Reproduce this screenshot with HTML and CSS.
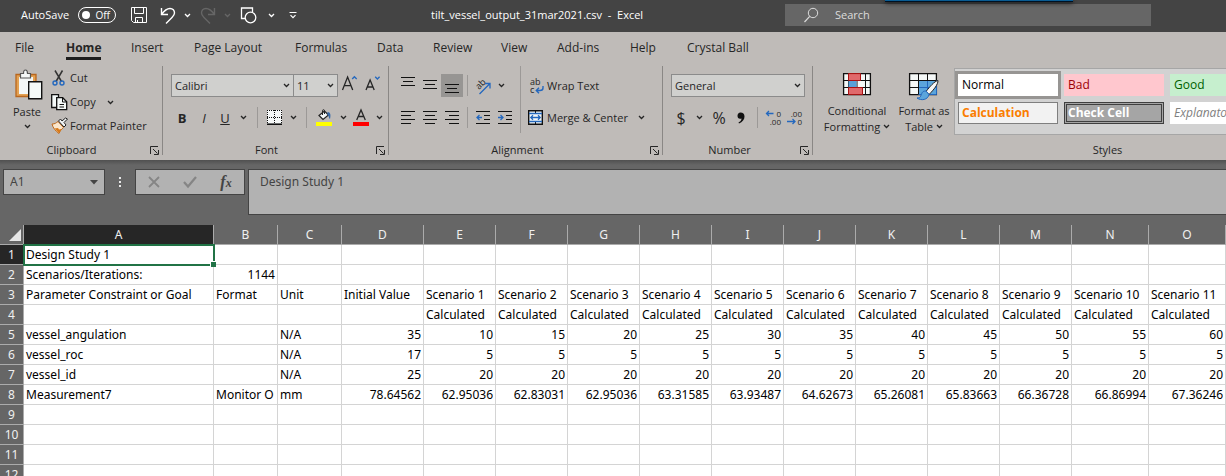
FILE: index.html
```html
<!DOCTYPE html>
<html lang="en">
<head>
<meta charset="utf-8">
<meta name="viewport" content="width=device-width, initial-scale=1">
<title>tilt_vessel_output_31mar2021.csv - Excel</title>
<link rel="stylesheet" href="styles.css">
</head>
<body>
<svg class="sprite" aria-hidden="true">
  <symbol id="chev" viewBox="0 0 7 5"><path d="M1 1l2.5 2.5L6 1" fill="none" stroke="currentColor" stroke-width="1.3"/></symbol>
  <symbol id="launch" viewBox="0 0 9 9"><path d="M.5 8V.5H8M3 3l4.500 4.500M8.500 4v4.500H4" fill="none" stroke="currentColor"/></symbol>
</svg>

<header class="titlebar">
  <div class="quick">
    <label class="autosave-label" for="autosave">AutoSave</label>
    <span class="toggle"><input type="checkbox" id="autosave"><span>Off</span></span>
    <button aria-label="Save"><svg width="16" height="16" viewBox="0 0 16 16"><path d="M.5.5h15v15h-13l-2-2zM3.500.5v6h9v-6M4.500 15.500v-5h7v5M6.500 13v2" fill="none" stroke="currentColor"/></svg></button>
    <button aria-label="Undo"><svg width="16" height="17" viewBox="0 0 16 17"><path d="M1.500 1v6.500H8M1.500 7.500C4 4 6.500 1.500 10 1.500c3 0 4.500 2 4.500 4.500 0 2-1 3-2.500 4.500L6 16.500" fill="none" stroke="currentColor" stroke-width="1.400"/></svg></button>
    <button aria-label="Undo list"><svg class="chev"><use href="#chev"/></svg></button>
    <button class="dim" aria-label="Redo"><svg width="16" height="17" viewBox="0 0 16 17"><path d="M14.500 1v6.500H8M14.500 7.500C12 4 9.500 1.500 6 1.500c-3 0-4.500 2-4.500 4.500 0 2 1 3 2.500 4.500l6 6" fill="none" stroke="currentColor" stroke-width="1.400"/></svg></button>
    <button class="dim" aria-label="Redo list"><svg class="chev"><use href="#chev"/></svg></button>
    <button aria-label="Shapes"><svg width="17" height="17" viewBox="0 0 17 17"><path d="M5 11.500H1.500V1h11v4" fill="none" stroke="currentColor" stroke-width="1.300"/><circle cx="10.500" cy="10.500" r="5.300" fill="none" stroke="currentColor" stroke-width="1.300"/></svg></button>
    <button aria-label="Shapes list"><svg class="chev"><use href="#chev"/></svg></button>
    <button aria-label="Customize toolbar"><svg width="8" height="7" viewBox="0 0 8 7"><path d="M.5.5h7M1.500 3.200L4 5.700l2.500-2.500" fill="none" stroke="currentColor" stroke-width="1.200"/></svg></button>
  </div>
  <div class="doc-title">tilt_vessel_output_31mar2021.csv&nbsp; -&nbsp; Excel</div>
  <label class="search">
    <svg width="15" height="16" viewBox="0 0 15 16"><circle cx="9" cy="6" r="4.700" fill="none" stroke="currentColor"/><path d="M5.700 9.300L.5 15" stroke="currentColor" stroke-width="1.200"/></svg>
    <input type="text" placeholder="Search" aria-label="Search">
  </label>
  <div class="share-strip"></div>
</header>

<section class="ribbon">
  <nav class="tabs">
    <a href="#">File</a><a href="#" class="active">Home</a><a href="#">Insert</a><a href="#">Page Layout</a><a href="#">Formulas</a><a href="#">Data</a><a href="#">Review</a><a href="#">View</a><a href="#">Add-ins</a><a href="#">Help</a><a href="#">Crystal Ball</a>
  </nav>
  <div class="groups">
    <div class="group clipboard">
      <div class="clip-body">
        <button class="paste">
          <svg width="28" height="31" viewBox="0 0 28 31"><path d="M1 5.500h20v22H1z" fill="#e3a152" stroke="#b8661e" stroke-width="1.300"/><path d="M4 8h14v17H4z" fill="#f4f7f7"/><path d="M5.500 9V4.500h3C8.500 2 9 1 10.500 1s2 1 2 3.500h3V9z" fill="#f4f7f7" stroke="#555" stroke-width="1.200"/><path d="M13.700 12.700h13v17h-13z" fill="#f4f9f8" stroke="#111" stroke-width="1.400"/></svg>
          <span>Paste</span>
          <svg class="chev"><use href="#chev"/></svg>
        </button>
        <div class="clip-list">
          <button><svg width="18" height="16" viewBox="0 0 18 16"><path d="M4 .5l6.500 11M11.500.5L5 11.500" stroke="#333" stroke-width="1.500"/><circle cx="4" cy="13" r="2" fill="none" stroke="#2468be" stroke-width="1.400"/><circle cx="11" cy="13" r="2" fill="none" stroke="#2468be" stroke-width="1.400"/></svg><span>Cut</span></button>
          <button><svg width="18" height="17" viewBox="0 0 18 17"><path d="M6 13.500H.7V.7H7.500v3" fill="#f4f9f8" stroke="#111" stroke-width="1.300"/><path d="M5.700 3.700h6l4 4v8h-10z" fill="#f4f9f8" stroke="#111" stroke-width="1.300"/><path d="M11.500 3.700V8h4M8.500 10.500h4.500M8.500 13h4.500" fill="none" stroke="#111"/></svg><span>Copy</span><svg class="chev"><use href="#chev"/></svg></button>
          <button><svg width="18" height="16" viewBox="0 0 18 16"><path d="M1 6c3 0 4-1 6-2.500l5.500 6C10 11.500 9 13 8 15.500 4.500 13 2 10 1 6z" fill="#fae6cc" stroke="#bc681c"/><path d="M3.500 10.500L7 10l1 1.500 3-.500-3 4z" fill="#d87918"/><path d="M7.500 3l5.500 6 2-2-2-2.500L16.500 1 14.500 0 11 3 9.500 1z" fill="#f4f7f7" stroke="#222"/></svg><span>Format Painter</span></button>
        </div>
      </div>
      <footer><span>Clipboard</span><button aria-label="Clipboard settings"><svg class="launch"><use href="#launch"/></svg></button></footer>
    </div>

    <div class="group font">
      <div class="rows">
        <div class="font-row1">
          <span class="combo"><select aria-label="Font"><option>Calibri</option></select><svg class="chev"><use href="#chev"/></svg></span>
          <span class="combo size"><select aria-label="Font size"><option>11</option></select><svg class="chev"><use href="#chev"/></svg></span>
          <button aria-label="Increase font size"><svg width="18" height="18" viewBox="0 0 18 18"><path d="M2.500 16L7.600 3l5.100 13M4.300 11.700h6.600" fill="none" stroke="#262626" stroke-width="1.300"/><path d="M12.200 5l2.200-2.300L16.700 5" fill="none" stroke="#2468be" stroke-width="1.300"/></svg></button>
          <button aria-label="Decrease font size"><svg width="18" height="18" viewBox="0 0 18 18"><path d="M3 16L7.100 6l4.100 10M4.400 13h5.400" fill="none" stroke="#262626" stroke-width="1.300"/><path d="M12.200 2.700L14.400 5l2.200-2.300" fill="none" stroke="#2468be" stroke-width="1.300"/></svg></button>
        </div>
        <div class="font-row2">
          <button class="glyph"><b>B</b></button><button class="glyph"><i>I</i></button><button class="glyph"><u>U</u></button>
          <button aria-label="Underline styles"><svg class="chev"><use href="#chev"/></svg></button>
          <span class="sep"></span>
          <button aria-label="Borders"><svg width="15" height="15" viewBox="0 0 15 15"><path d="M0 0h15v15H0z" fill="#f5f7f7"/><path d="M0 .5h15M0 7.500h15M.5 0v14M7.500 0v14M14.500 0v14" stroke="#111" stroke-dasharray="1 1"/><path d="M0 14.200h15" stroke="#111" stroke-width="1.600"/></svg></button>
          <button aria-label="Border list"><svg class="chev"><use href="#chev"/></svg></button>
          <span class="sep"></span>
          <button aria-label="Fill color"><svg width="16" height="17" viewBox="0 0 16 17"><path d="M3 6.500L8.500 2l4 4-5.500 4.500z" fill="#f4f7f7" stroke="#222" stroke-width="1.200"/><path d="M6.500 6V1.500c0-1 2-1 2 0V5" fill="none" stroke="#222"/><path d="M11.500 3c3 0 3.500 3 2.500 7-1.500-1-1-4-2.500-4z" fill="#3769a8"/><path d="M0 13h16v4H0z" fill="#ff0"/></svg></button>
          <button aria-label="Fill color list"><svg class="chev"><use href="#chev"/></svg></button>
          <button aria-label="Font color"><svg width="16" height="17" viewBox="0 0 16 17"><path d="M3.700 11L8 1l4.300 10M5.200 7.500h5.600" fill="none" stroke="#262626" stroke-width="1.300"/><path d="M0 13h16v4H0z" fill="#f00"/></svg></button>
          <button aria-label="Font color list"><svg class="chev"><use href="#chev"/></svg></button>
        </div>
      </div>
      <footer><span>Font</span><button aria-label="Font settings"><svg class="launch"><use href="#launch"/></svg></button></footer>
    </div>

    <div class="group alignment">
      <div class="align-body">
        <div class="rows">
          <div class="align-row">
            <button aria-label="Top align"><svg width="14" height="20" viewBox="0 0 14 20"><path d="M0 1.500h14M2 5.500h10M0 9.500h14" stroke="#111"/></svg></button>
            <button aria-label="Middle align"><svg width="14" height="20" viewBox="0 0 14 20"><path d="M0 4.500h14M2 8.500h10M0 12.500h14" stroke="#111"/></svg></button>
            <button class="pressed" aria-label="Bottom align"><svg width="14" height="20" viewBox="0 0 14 20"><path d="M0 8.500h14M2 12.500h10M0 16.500h14" stroke="#111"/></svg></button>
            <span class="sep"></span>
            <button aria-label="Orientation"><svg width="18" height="18" viewBox="0 0 18 18"><text transform="translate(5 13) rotate(-45)" class="icon-text">ab</text><path d="M5.500 17L16 6.500M11 6.500h5v5" fill="none" stroke="#2468be" stroke-width="1.300"/></svg></button>
            <button aria-label="Orientation list"><svg class="chev"><use href="#chev"/></svg></button>
          </div>
          <div class="align-row low">
            <button aria-label="Align left"><svg width="14" height="14" viewBox="0 0 14 14"><path d="M0 .5h14M0 4.500h10M0 8.500h14M0 12.500h10" stroke="#111"/></svg></button>
            <button aria-label="Center"><svg width="14" height="14" viewBox="0 0 14 14"><path d="M0 .5h14M2 4.500h10M0 8.500h14M2 12.500h10" stroke="#111"/></svg></button>
            <button aria-label="Align right"><svg width="14" height="14" viewBox="0 0 14 14"><path d="M0 .5h14M4 4.500h10M0 8.500h14M4 12.500h10" stroke="#111"/></svg></button>
            <span class="sep"></span>
            <button aria-label="Decrease indent"><svg width="14" height="14" viewBox="0 0 14 14"><path d="M0 .5h14M8 4.500h6M8 8.500h6M0 12.500h14" stroke="#111"/><path d="M6 6.500H1M3.500 4L1 6.500 3.500 9" fill="none" stroke="#2468be" stroke-width="1.300"/></svg></button>
            <button aria-label="Increase indent"><svg width="14" height="14" viewBox="0 0 14 14"><path d="M0 .5h14M8 4.500h6M8 8.500h6M0 12.500h14" stroke="#111"/><path d="M0 6.500h5M2.500 4L5 6.500 2.500 9" fill="none" stroke="#2468be" stroke-width="1.300"/></svg></button>
          </div>
        </div>
        <div class="rows wraps">
          <button><svg width="18" height="18" viewBox="0 0 18 18"><text x="2" y="8" class="icon-text">ab</text><text x="2" y="16" class="icon-text">c</text><path d="M15 9v2c0 2-1 2.500-3 2.500H8.500M11 10.800l-2.700 2.700 2.700 2.700" fill="none" stroke="#2468be" stroke-width="1.400"/></svg><span>Wrap Text</span></button>
          <button class="merge"><svg width="18" height="15" viewBox="0 0 18 15"><path d="M.7.7h13.600v13.600H.7z" fill="#f5f8f8" stroke="#111" stroke-width="1.400"/><path d="M7.500.5v3M7.500 11.500v3" stroke="#111"/><path d="M1 3.500h13M1 11.500h13" stroke="#2468be" stroke-width="1.400"/><path d="M3 7.500h9M5 5.300L2.800 7.500 5 9.700M10 5.300l2.200 2.200L10 9.700" fill="none" stroke="#2468be" stroke-width="1.300"/></svg><span>Merge &amp; Center</span><svg class="chev"><use href="#chev"/></svg></button>
        </div>
      </div>
      <footer><span>Alignment</span><button aria-label="Alignment settings"><svg class="launch"><use href="#launch"/></svg></button></footer>
    </div>

    <div class="group number">
      <div class="rows">
        <span class="combo"><select aria-label="Number format"><option>General</option></select><svg class="chev"><use href="#chev"/></svg></span>
        <div class="num-row">
          <button class="sign">$</button>
          <button aria-label="Currency list"><svg class="chev"><use href="#chev"/></svg></button>
          <button class="sign">%</button>
          <button aria-label="Comma style"><svg width="8" height="12" viewBox="0 0 8 12"><path d="M3.500.5C6 .5 7.500 2 7.500 4.500c0 3-2 5.500-5.500 7l-.5-1C4 9 4.500 8 4.500 6.500 2 7.500.5 6 .5 3.800.5 2 1.700.5 3.500.5z" fill="#111"/></svg></button>
          <span class="sep"></span>
          <button aria-label="Increase decimal"><svg width="16" height="17" viewBox="0 0 16 17"><text x="16" y="8" class="digits">0</text><text x="16" y="16" class="digits">.00</text><path d="M8.500 4.500h-7M4 2L1.500 4.500 4 7" fill="none" stroke="#2468be" stroke-width="1.300"/></svg></button>
          <button aria-label="Decrease decimal"><svg width="16" height="17" viewBox="0 0 16 17"><text x="16" y="8" class="digits">.00</text><text x="16" y="16" class="digits">0</text><path d="M1 12.500h8M6.500 10L9 12.500 6.500 15" fill="none" stroke="#2468be" stroke-width="1.300"/></svg></button>
        </div>
      </div>
      <footer><span>Number</span><button aria-label="Number settings"><svg class="launch"><use href="#launch"/></svg></button></footer>
    </div>

    <div class="group styles">
      <div class="styles-body">
        <button class="big"><svg width="28" height="29" viewBox="0 0 28 29"><path d="M.6.6h26.800v21H.6z" fill="#f5f8f7" stroke="#111" stroke-width="1.300"/><path d="M0 7.500h28M0 14.500h28M5.500 0v22M22.500 0v22M14 7v8" stroke="#111"/><path d="M5.500.6h12v6.900h-12zM5.500 14.500h14v7.100h-14z" fill="#e0696b" stroke="#a11"/><path d="M5.500 8h8v6h-8z" fill="#58a0d8"/></svg><span>Conditional<br>Formatting <svg class="chev"><use href="#chev"/></svg></span></button>
        <button class="big"><svg width="30" height="29" viewBox="0 0 30 29"><path d="M.6.6h26.800v21H.6z" fill="#f5f8f7" stroke="#111" stroke-width="1.300"/><path d="M9.500 7.500h18v14h-18z" fill="#5ba5dc"/><path d="M0 7.500h28M0 14.500h10M9.500 0v22M18.500 0v8" stroke="#111"/><path d="M10 14.500h17M18.500 8v13M9.500 21.500h18v-14" fill="none" stroke="#2468be"/><path d="M29 7.500c-4 1-8 6-12 11l3 3c5-5 9-10 9-14z" fill="#f7f7f7" stroke="#222"/><path d="M17 18c-4 0-4 2-5 4.500-.7 2-2 2.500-4 2.500 4 3 11 2 12-3.500z" fill="#5ba5dc" stroke="#2468be"/></svg><span>Format as<br>Table <svg class="chev"><use href="#chev"/></svg></span></button>
        <div class="gallery">
          <button class="st normal">Normal</button><button class="st bad">Bad</button><button class="st good">Good</button>
          <button class="st calc">Calculation</button><button class="st check">Check Cell</button><button class="st expl">Explanatory T...</button>
        </div>
      </div>
      <footer><span>Styles</span></footer>
    </div>
  </div>
</section>

<section class="formula-bar">
  <div class="name-box"><input type="text" value="A1" aria-label="Name box"><svg width="8" height="5" viewBox="0 0 8 5"><path d="M0 0h8L4 4.500z" fill="#444"/></svg></div>
  <svg class="dots" width="3" height="11" viewBox="0 0 3 11"><path d="M0 0h2v2H0zM0 4h2v2H0zM0 8h2v2H0z" fill="#e8e8e8"/></svg>
  <div class="fx">
    <button aria-label="Cancel"><svg width="12" height="12" viewBox="0 0 12 12"><path d="M1 1l10 10M11 1L1 11" stroke="#858585" stroke-width="1.800"/></svg></button>
    <button aria-label="Enter"><svg width="14" height="12" viewBox="0 0 14 12"><path d="M1 6l4 4.500L13 1" fill="none" stroke="#858585" stroke-width="2.200"/></svg></button>
    <button class="fn" aria-label="Insert function">f<small>x</small></button>
  </div>
  <textarea class="formula" aria-label="Formula">Design Study 1</textarea>
</section>

<main class="sheet">
  <table>
    <colgroup><col class="w-head"><col class="w-a"><col class="w-b"><col class="w-b"><col class="w-d"><col class="w-s"><col class="w-s"><col class="w-s"><col class="w-s"><col class="w-s"><col class="w-s"><col class="w-s"><col class="w-s"><col class="w-s"><col class="w-n"><col class="w-n"><col></colgroup>
    <thead><tr><th class="corner"><svg width="12" height="12" viewBox="0 0 12 12"><path d="M12 0v12H0z" fill="#e6e6e6"/></svg></th><th class="on">A</th><th>B</th><th>C</th><th>D</th><th>E</th><th>F</th><th>G</th><th>H</th><th>I</th><th>J</th><th>K</th><th>L</th><th>M</th><th>N</th><th>O</th><th></th></tr></thead>
    <tbody>
      <tr><th class="on">1</th><td class="selected">Design Study 1</td><td></td><td></td><td></td><td></td><td></td><td></td><td></td><td></td><td></td><td></td><td></td><td></td><td></td><td></td><td></td></tr>
      <tr><th>2</th><td>Scenarios/Iterations:</td><td class="n">1144</td><td></td><td></td><td></td><td></td><td></td><td></td><td></td><td></td><td></td><td></td><td></td><td></td><td></td><td></td></tr>
      <tr><th>3</th><td>Parameter Constraint or Goal</td><td>Format</td><td>Unit</td><td>Initial Value</td><td>Scenario 1</td><td>Scenario 2</td><td>Scenario 3</td><td>Scenario 4</td><td>Scenario 5</td><td>Scenario 6</td><td>Scenario 7</td><td>Scenario 8</td><td>Scenario 9</td><td>Scenario 10</td><td>Scenario 11</td><td></td></tr>
      <tr><th>4</th><td></td><td></td><td></td><td></td><td>Calculated</td><td>Calculated</td><td>Calculated</td><td>Calculated</td><td>Calculated</td><td>Calculated</td><td>Calculated</td><td>Calculated</td><td>Calculated</td><td>Calculated</td><td>Calculated</td><td></td></tr>
      <tr class="nums"><th>5</th><td>vessel_angulation</td><td></td><td>N/A</td><td>35</td><td>10</td><td>15</td><td>20</td><td>25</td><td>30</td><td>35</td><td>40</td><td>45</td><td>50</td><td>55</td><td>60</td><td></td></tr>
      <tr class="nums"><th>6</th><td>vessel_roc</td><td></td><td>N/A</td><td>17</td><td>5</td><td>5</td><td>5</td><td>5</td><td>5</td><td>5</td><td>5</td><td>5</td><td>5</td><td>5</td><td>5</td><td></td></tr>
      <tr class="nums"><th>7</th><td>vessel_id</td><td></td><td>N/A</td><td>25</td><td>20</td><td>20</td><td>20</td><td>20</td><td>20</td><td>20</td><td>20</td><td>20</td><td>20</td><td>20</td><td>20</td><td></td></tr>
      <tr class="nums"><th>8</th><td>Measurement7</td><td>Monitor O</td><td>mm</td><td>78.64562</td><td>62.95036</td><td>62.83031</td><td>62.95036</td><td>63.31585</td><td>63.93487</td><td>64.62673</td><td>65.26081</td><td>65.83663</td><td>66.36728</td><td>66.86994</td><td>67.36246</td><td></td></tr>
      <tr><th>9</th><td></td><td></td><td></td><td></td><td></td><td></td><td></td><td></td><td></td><td></td><td></td><td></td><td></td><td></td><td></td><td></td></tr>
      <tr><th>10</th><td></td><td></td><td></td><td></td><td></td><td></td><td></td><td></td><td></td><td></td><td></td><td></td><td></td><td></td><td></td><td></td></tr>
      <tr><th>11</th><td></td><td></td><td></td><td></td><td></td><td></td><td></td><td></td><td></td><td></td><td></td><td></td><td></td><td></td><td></td><td></td></tr>
      <tr><th>12</th><td></td><td></td><td></td><td></td><td></td><td></td><td></td><td></td><td></td><td></td><td></td><td></td><td></td><td></td><td></td><td></td></tr>
    </tbody>
  </table>
</main>
</body>
</html>
```

FILE: styles.css
```css
* { box-sizing: border-box; }
body {
  margin: 0;
  height: 100vh;
  display: flex;
  flex-direction: column;
  overflow: hidden;
  background: #fff;
  color: #262626;
  font: 11px/16px "Open Sans", "Noto Sans", sans-serif;
}
button, input, select, textarea { font: inherit; color: inherit; margin: 0; padding: 0; border: 0; background: none; border-radius: 0; }
button { display: flex; align-items: center; justify-content: center; white-space: nowrap; }
svg { display: block; flex: none; overflow: visible; }
.sprite { width: 0; height: 0; position: absolute; }
.chev { width: 7px; height: 5px; }
.launch { width: 9px; height: 9px; }

/* Title bar */
.titlebar {
  position: relative;
  flex: none;
  height: 32px;
  padding: 4px 0 6px;
  display: grid;
  grid-template-columns: 431px 354px minmax(0, 1fr) 75px;
  grid-template-rows: 22px;
  align-items: center;
  background: #444;
  color: #fff;
}
.quick {
  display: grid;
  grid-template-columns: 57px 46px 30px 27px 13px 27px 13px 29px 17px 26px;
  padding-left: 21px;
  align-items: center;
  justify-items: center;
}
.autosave-label { justify-self: start; }
.toggle { justify-self: start; display: flex; align-items: center; width: 38px; height: 16px; padding: 0 5px 0 3px; border: 1px solid #fff; border-radius: 8px; justify-content: space-between; font-size: 10px; }
.toggle input { appearance: none; width: 8px; height: 8px; border-radius: 50%; background: #fff; }
.dim { color: #666; }
.doc-title { white-space: pre; }
.search { display: flex; align-items: center; gap: 16px; height: 22px; padding-left: 19px; background: #666; color: #dcdcdc; }
.search input { flex: 1; min-width: 0; }
.search input::placeholder { color: #dcdcdc; opacity: 1; }
.share-strip { position: absolute; top: 0; left: 885px; width: 188px; height: 2px; background: #095c93; border-bottom: 1px solid #012; box-shadow: 0 1px 4px #000; }

/* Ribbon */
.ribbon { flex: none; background: #bfbbb8; overflow: hidden; }
.tabs {
  display: grid;
  grid-template-columns: 51px 65px 63px 101px 82px 56px 68px 56px 73px 57px 70px;
  justify-items: start;
  height: 34px;
  padding: 6px 0 0 15px;
  font-size: 12px;
  line-height: 19px;
}
.tabs a { height: 22px; color: #262626; text-decoration: none; white-space: nowrap; }
.tabs .active { font-weight: 700; border-bottom: 3px solid #1d1d1d; }
.groups { display: flex; height: 94px; padding-bottom: 5px; }
.group { flex: none; display: flex; flex-direction: column; justify-content: space-between; border-right: 1px solid #8a8785; }
.group footer { display: grid; grid-template-columns: 1fr auto 1fr; height: 12px; align-items: center; margin-bottom: 1px; }
.group footer span { grid-column: 2; }
.group footer button { justify-self: end; margin-right: 3px; }
.clipboard { width: 163px; }
.clipboard footer { padding-left: 1px; }
.clipboard footer span { margin-right: 20px; }
.font { width: 226px; }
.font footer span { margin-right: 18px; }
.alignment { width: 274px; }
.alignment footer span { margin-right: 16px; }
.number { width: 150px; }
.number footer span { margin-right: 16px; }
.styles { width: 590px; }
.group footer { grid-template-columns: 1fr auto 1fr; }
.sep { width: 1px; height: 21px; background: #9c9997; }
.rows { display: flex; flex-direction: column; gap: 10px; padding-top: 8px; }

.clip-body { display: flex; padding: 0 0 0 11px; }
.paste { flex-direction: column; justify-content: flex-start; width: 32px; padding-top: 3px; gap: 4px; }
.paste svg:first-child { margin-left: 4px; }
.clip-list { display: grid; grid-template-rows: repeat(3, 24px); margin-left: 8px; justify-items: start; }
.clip-list button span { margin-left: 1px; }
.clip-list .chev { margin-left: 11px; }

.combo { display: grid; align-items: center; height: 23px; border: 1px solid #8b8b8b; background: #d0d0ce; }
.combo > * { grid-area: 1 / 1; }
.combo select { appearance: none; width: 100%; padding-left: 3px; }
.combo .chev { justify-self: end; margin-right: 3px; pointer-events: none; }
.font-row1 { display: grid; grid-template-columns: 123px 44px 20px 23px; padding-left: 8px; }
.font-row1 button { justify-content: flex-end; align-items: flex-start; }
.combo.size { border-left-width: 0; }
.font-row2 { display: grid; grid-template-columns: 22px 22px 20px 17px 10px 25px 13px 12px 24px 14px 22px 14px; padding-left: 8px; height: 21px; align-items: center; justify-items: center; }
.glyph { font-size: 13px; }

.align-body { display: grid; grid-template-columns: 131px 1fr; }
.align-body .rows { height: 67px; }
.align-row { display: grid; grid-template-columns: 22px 22px 22px 8px 23px 23px; height: 23px; align-items: center; justify-items: center; padding-left: 8px; }
.align-row > :nth-child(6) { justify-self: start; margin-left: 4px; }
.align-row.low { height: 21px; }
.pressed { width: 22px; height: 23px; background: #979593; }
.icon-text { font: 9px/9px "Open Sans", sans-serif; fill: #262626; }
.wraps { border-left: 1px solid #9c9997; align-items: flex-start; padding-left: 7px; }
.wraps button { height: 23px; }
.wraps .merge { height: 21px; }
.wraps span { margin-left: 1px; }
.wraps .chev { margin-left: 10px; }

.number .combo { width: 134px; margin-left: 8px; }
.num-row { display: grid; grid-template-columns: 20px 16px 24px 20px 12px 19px 23px; padding-left: 8px; height: 21px; align-items: center; justify-items: center; }
.sign { font-size: 16px; }
.digits { font: 8px/8px "Open Sans", sans-serif; fill: #262626; text-anchor: end; }

.styles-body { display: flex; padding-left: 10px; }
.big { flex-direction: column; justify-content: flex-start; width: 68px; padding-top: 7px; gap: 1px; line-height: 16px; }
.big + .big { width: 66px; }
.big .chev { display: inline-block; vertical-align: 2px; }
.gallery { margin: 2px 0 0 -3px; display: grid; grid-template-columns: repeat(3, 100px); grid-template-rows: 22px 22px; gap: 6px; padding: 5px 3px; border: 1px solid #a6a6a6; background: #d2d2d2; width: 440px; }
.st { justify-content: flex-start; padding-left: 4px; font: 12px/18px "Open Sans", "Noto Sans", sans-serif; overflow: hidden; }
.normal { background: #fff; color: #000; outline: 3px solid #979593; }
.bad { background: #ffc7ce; color: #9c0006; }
.good { background: #c6efce; color: #006100; }
.calc { background: #f2f2f2; color: #fa7d00; border: 1px solid #7f7f7f; font-weight: 700; padding-left: 3px; }
.check { background: #a5a5a5; color: #fff; border: 3px double #3f3f3f; font-weight: 700; padding-left: 1px; }
.expl { background: #fff; color: #7f7f7f; font-style: italic; }

/* Formula bar */
.formula-bar {
  flex: none;
  display: grid;
  grid-template-columns: 102px 30px 110px 3px minmax(0, 1fr);
  height: 65px;
  padding: 9px 0 10px 3px;
  background: linear-gradient(#505050, #666 5px);
  color: #444;
  font: 12px/18px "Noto Sans", "Open Sans", sans-serif;
}
.name-box, .fx { height: 26px; display: flex; align-items: center; background: #b2b2b2; border: 1px solid #444; }
.name-box { padding: 0 6px; }
.name-box input { flex: 1; min-width: 0; }
.dots { margin: 8px 0 0 14px; }
.fx { display: grid; grid-template-columns: repeat(3, 36px); justify-items: center; }
.fn { font: italic bold 16px/20px "Liberation Serif", serif; align-items: baseline; }
.fn small { font-size: 12px; }
.formula { grid-column: 5; height: 46px; padding: 3px 11px; resize: none; background: #b2b2b2; border: 1px solid #444; border-right: 0; overflow: hidden; }

/* Sheet */
.sheet { flex: 1; min-height: 0; overflow: hidden; }
table { table-layout: fixed; width: 100%; min-width: 1226px; border-spacing: 0; font: 12px/18px "Noto Sans", "Open Sans", sans-serif; color: #000; }
.w-head { width: 24px; }
.w-a { width: 190px; }
.w-b { width: 64px; }
.w-d { width: 82px; }
.w-s { width: 72px; }
.w-n { width: 77px; }
th, td { height: 20px; padding: 1px 2px 0; border-right: 1px solid #d4d4d4; border-bottom: 1px solid #d4d4d4; white-space: nowrap; overflow: hidden; text-align: left; }
th { padding: 0; font-weight: 400; text-align: center; background: #666; color: #f0f0f0; border-color: #ababab; }
thead th.on { background: #262626; border-bottom-color: #217346; }
tbody th { padding-top: 1px; }
tbody th.on { background: #262626; }
.corner svg { margin-left: 9px; }
.n, .nums td:nth-child(n+5) { text-align: right; }
.selected { position: relative; overflow: visible; outline: 2px solid #217346; outline-offset: -1px; }
.selected::after { content: ""; position: absolute; right: -3px; bottom: -3px; width: 5px; height: 5px; background: #217346; border: solid #fff; border-width: 1px 0 0 1px; box-sizing: content-box; }
```
